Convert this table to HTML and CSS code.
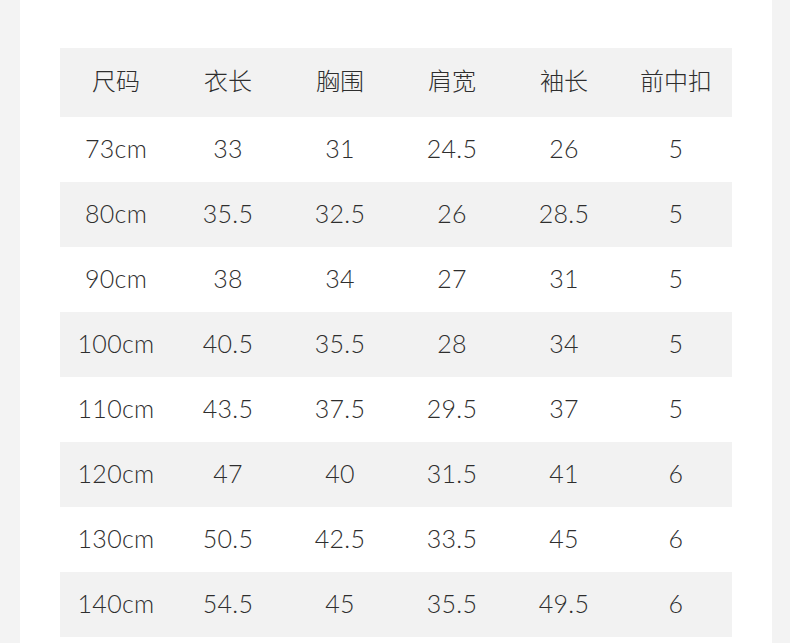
FILE: index.html
```html
<!DOCTYPE html>
<html>
<head>
<meta charset="utf-8">
<link rel="stylesheet" href="styles.css">
</head>
<body>
<div class="panel">
  <table class="size-table">
    <thead>
      <tr class="head"><th>尺码</th><th>衣长</th><th>胸围</th><th>肩宽</th><th>袖长</th><th>前中扣</th></tr>
    </thead>
    <tbody>
      <tr><td>73cm</td><td>33</td><td>31</td><td>24.5</td><td>26</td><td>5</td></tr>
      <tr class="alt"><td>80cm</td><td>35.5</td><td>32.5</td><td>26</td><td>28.5</td><td>5</td></tr>
      <tr><td>90cm</td><td>38</td><td>34</td><td>27</td><td>31</td><td>5</td></tr>
      <tr class="alt"><td>100cm</td><td>40.5</td><td>35.5</td><td>28</td><td>34</td><td>5</td></tr>
      <tr><td>110cm</td><td>43.5</td><td>37.5</td><td>29.5</td><td>37</td><td>5</td></tr>
      <tr class="alt"><td>120cm</td><td>47</td><td>40</td><td>31.5</td><td>41</td><td>6</td></tr>
      <tr><td>130cm</td><td>50.5</td><td>42.5</td><td>33.5</td><td>45</td><td>6</td></tr>
      <tr class="alt"><td>140cm</td><td>54.5</td><td>45</td><td>35.5</td><td>49.5</td><td>6</td></tr>
    </tbody>
  </table>
</div>
</body>
</html>
```
FILE: styles.css
```css
html, body {
  margin: 0;
  padding: 0;
  height: 100%;
  background: #f3f3f3;
  overflow: hidden;
}
.panel {
  margin-left: 20px;
  width: 752px;
  height: 100%;
  background: #ffffff;
  padding: 48px 0 0 40px;
  box-sizing: border-box;
}
.size-table {
  border-collapse: collapse;
  width: 672px;
  table-layout: fixed;
  color: #2e2e2e;
  font-family: Lato, "Noto Sans CJK SC", sans-serif;
  font-size: 25px;
}
.size-table th,
.size-table td {
  padding: 0;
  text-align: center;
  vertical-align: middle;
  line-height: 1;
}
.size-table th {
  height: 64px;
  padding-bottom: 5px;
  font-family: "Noto Sans CJK SC", sans-serif;
  font-weight: 300;
  font-size: 24px;
}
.size-table td {
  height: 62px;
  padding-bottom: 3px;
  font-weight: 300;
  letter-spacing: 0.3px;
}
.head, .alt {
  background: #f2f2f2;
}
```
